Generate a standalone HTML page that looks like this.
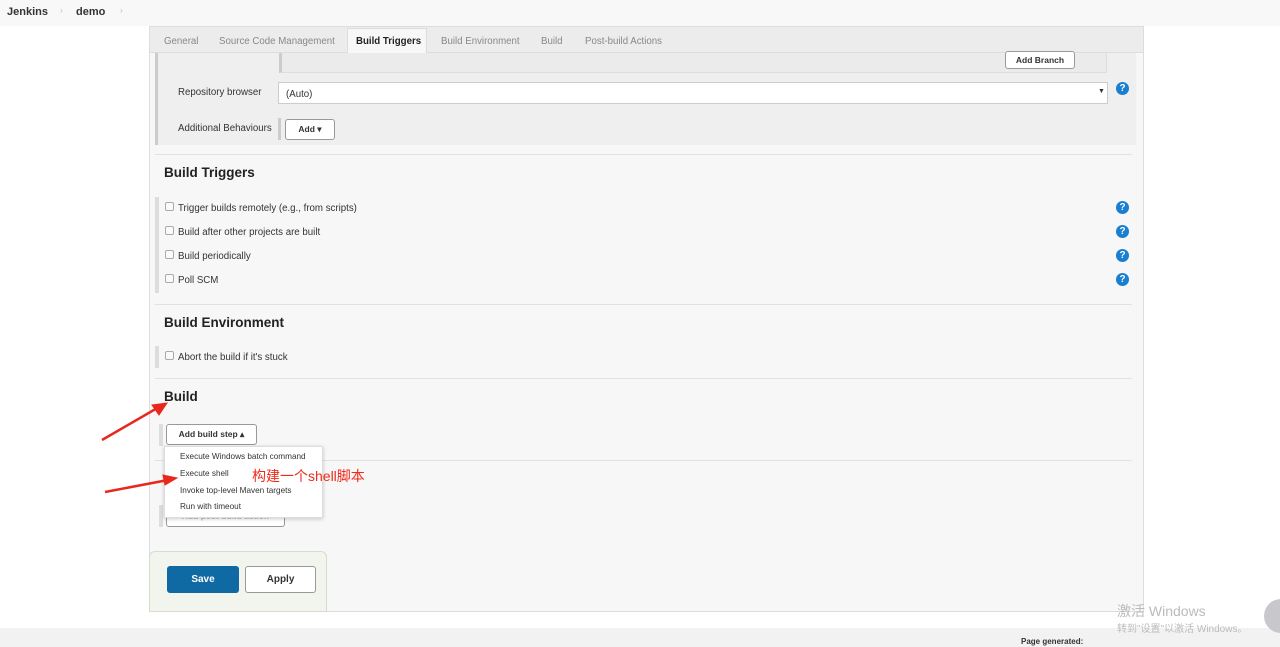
<!DOCTYPE html>
<html><head><meta charset="utf-8"><style>
*{margin:0;padding:0;box-sizing:border-box}
body{width:1280px;height:647px;overflow:hidden;background:#fff;font-family:"Liberation Sans","Noto Sans CJK SC",sans-serif;color:#333;position:relative}
.a{position:absolute}
.t{font-size:9.7px;color:#333;white-space:nowrap}
.h{font-size:13.5px;font-weight:bold;color:#222}
.cb{width:9px;height:9px;border:1px solid #aaa;border-radius:2px;background:#fafafa}
.q{width:13px;height:13px;border-radius:50%;background:#1a7fd0;color:#fff;font-size:10px;font-weight:bold;text-align:center;line-height:13px}
.bar{width:4px;background:#ddd}
.hr{height:1px;background:#e2e2e2}
.btn{border:1px solid #999;border-radius:3px;background:#fff;font-size:8.5px;font-weight:bold;color:#333;text-align:center}
</style></head><body>
<div class="a" style="left:0;top:0;width:1280px;height:26px;background:#f8f8f8"></div>
<div class="a t" style="left:7px;top:6px;font-size:11px;font-weight:bold">Jenkins</div>
<div class="a t" style="left:60px;top:6px;color:#bbb;font-size:8px">›</div>
<div class="a t" style="left:76px;top:6px;font-size:11px;font-weight:bold">demo</div>
<div class="a t" style="left:120px;top:6px;color:#bbb;font-size:8px">›</div>

<div class="a" style="left:149px;top:26px;width:995px;height:586px;background:#f7f7f7;border:1px solid #ddd"></div>
<div class="a" style="left:150px;top:27px;width:993px;height:26px;background:#ececec;border-bottom:1px solid #ddd"></div>
<div class="a t" style="left:164px;top:36px;color:#888">General</div>
<div class="a t" style="left:219px;top:36px;color:#888">Source Code Management</div>
<div class="a" style="left:347px;top:28px;width:80px;height:26px;background:#f7f7f7;border:1px solid #ddd;border-bottom:none"></div>
<div class="a t" style="left:356px;top:36px;font-weight:bold;color:#222">Build Triggers</div>
<div class="a t" style="left:441px;top:36px;color:#888">Build Environment</div>
<div class="a t" style="left:541px;top:36px;color:#888">Build</div>
<div class="a t" style="left:585px;top:36px;color:#888">Post-build Actions</div>

<div class="a" style="left:155px;top:53px;width:981px;height:92px;background:#efefef"></div>
<div class="a bar" style="left:155px;top:53px;height:92px;width:3px;background:#ccc"></div>
<div class="a" style="left:279px;top:53px;width:828px;height:20px;background:#ebebeb;border:1px solid #ddd;border-top:none;border-left:3px solid #ccc"></div>
<div class="a btn" style="left:1005px;top:51px;width:70px;height:18px;line-height:16px">Add Branch</div>
<div class="a t" style="left:178px;top:87px">Repository browser</div>
<div class="a" style="left:278px;top:82px;width:830px;height:22px;background:#fff;border:1px solid #ccc"></div>
<div class="a t" style="left:286px;top:89px">(Auto)</div>
<div class="a t" style="left:1098px;top:88px;font-size:7px">▼</div>
<div class="a q" style="left:1116px;top:82px">?</div>
<div class="a t" style="left:178px;top:123px">Additional Behaviours</div>
<div class="a bar" style="left:278px;top:118px;height:22px;width:3px;background:#ccc"></div>
<div class="a btn" style="left:285px;top:119px;width:50px;height:21px;line-height:19px">Add ▾</div>

<div class="a hr" style="left:155px;top:154px;width:977px"></div>
<div class="a h" style="left:164px;top:165px">Build Triggers</div>
<div class="a bar" style="left:155px;top:197px;height:96px"></div>
<div class="a cb" style="left:165px;top:202px"></div><div class="a t" style="left:178px;top:203px">Trigger builds remotely (e.g., from scripts)</div><div class="a q" style="left:1116px;top:201px">?</div>
<div class="a cb" style="left:165px;top:226px"></div><div class="a t" style="left:178px;top:227px">Build after other projects are built</div><div class="a q" style="left:1116px;top:225px">?</div>
<div class="a cb" style="left:165px;top:250px"></div><div class="a t" style="left:178px;top:251px">Build periodically</div><div class="a q" style="left:1116px;top:249px">?</div>
<div class="a cb" style="left:165px;top:274px"></div><div class="a t" style="left:178px;top:275px">Poll SCM</div><div class="a q" style="left:1116px;top:273px">?</div>

<div class="a hr" style="left:155px;top:304px;width:977px"></div>
<div class="a h" style="left:164px;top:315px">Build Environment</div>
<div class="a bar" style="left:155px;top:346px;height:22px"></div>
<div class="a cb" style="left:165px;top:351px"></div><div class="a t" style="left:178px;top:352px">Abort the build if it's stuck</div>

<div class="a hr" style="left:155px;top:378px;width:977px"></div>
<div class="a h" style="left:164px;top:389px">Build</div>
<div class="a bar" style="left:159px;top:424px;height:22px"></div>
<div class="a btn" style="left:166px;top:424px;width:91px;height:21px;line-height:19px">Add build step ▴</div>
<div class="a hr" style="left:155px;top:460px;width:977px"></div>
<div class="a bar" style="left:159px;top:505px;height:22px"></div>
<div class="a btn" style="left:166px;top:506px;width:119px;height:21px;line-height:19px;color:#bbb">Add post-build action</div>
<div class="a" style="left:164px;top:446px;width:159px;height:72px;background:#fff;border:1px solid #ddd;box-shadow:0 1px 4px rgba(0,0,0,.2)"></div>
<div class="a t" style="left:180px;top:452px;font-size:8.2px">Execute Windows batch command</div>
<div class="a t" style="left:180px;top:469px;font-size:8.2px">Execute shell</div>
<div class="a t" style="left:180px;top:486px;font-size:8.2px">Invoke top-level Maven targets</div>
<div class="a t" style="left:180px;top:502px;font-size:8.2px">Run with timeout</div>
<div class="a t" style="left:252px;top:466px;font-size:14px;color:#f02a1a">构建一个shell脚本</div>
<svg class="a" style="left:95px;top:395px" width="100" height="110"><g stroke="#e8281c" stroke-width="2.5" fill="#e8281c"><line x1="7" y1="45" x2="64" y2="12"/><polygon points="72,8 57,10 64,20" stroke-width="1"/><line x1="10" y1="97" x2="73" y2="85"/><polygon points="82,83 68,80 70,90" stroke-width="1"/></g></svg>

<div class="a" style="left:149px;top:551px;width:178px;height:61px;background:#f1f5ee;border:1px solid #d5dcd0;border-radius:6px 6px 0 0"></div>
<div class="a" style="left:167px;top:566px;width:72px;height:27px;background:#0f6aa3;border-radius:3px;color:#fff;font-size:10px;font-weight:bold;text-align:center;line-height:27px">Save</div>
<div class="a" style="left:245px;top:566px;width:71px;height:27px;background:#fff;border:1px solid #999;border-radius:3px;color:#333;font-size:10px;font-weight:bold;text-align:center;line-height:25px">Apply</div>

<div class="a" style="left:0;top:628px;width:1280px;height:19px;background:#f2f2f2"></div>
<div class="a t" style="left:1021px;top:637px;font-size:8px;font-weight:bold">Page generated:</div>
<div class="a t" style="left:1117px;top:601px;font-size:14px;color:#bbb">激活 Windows</div>
<div class="a t" style="left:1117px;top:620px;font-size:10px;color:#bbb">转到"设置"以激活 Windows。</div>
<div class="a" style="left:1264px;top:599px;width:34px;height:34px;border-radius:50%;background:#c8c8cc"></div>
</body></html>
